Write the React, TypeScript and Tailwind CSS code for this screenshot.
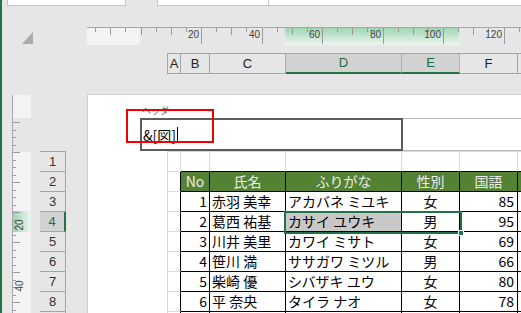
import React from 'react';

const JP = { fontFamily: '"Noto Sans CJK JP", "Liberation Sans", sans-serif' };

// column widths of A..F in px (right border included), G fills the rest
const COLS = [13, 29, 76, 116, 58, 58];

const DATA = [
    ['1', '赤羽 美幸', 'アカバネ ミユキ', '女', '85'],
    ['2', '葛西 祐基', 'カサイ ユウキ', '男', '95'],
    ['3', '川井 美里', 'カワイ ミサト', '女', '69'],
    ['4', '笹川 満', 'ササガワ ミツル', '男', '66'],
    ['5', '柴崎 優', 'シバザキ ユウ', '女', '80'],
    ['6', '平 奈央', 'タイラ ナオ', '女', '78'],
];

const PX_PER_MM = 3.025;
const ZERO_X = 53.5; // ruler origin, relative to ruler left edge

function HRuler() {
    const ticks: number[] = [];
    for (let mm = -15; mm <= 125; mm += 5) ticks.push(mm);
    return (
        <div className="relative h-[18px] flex-1 border-t border-[#a8a8a8] overflow-hidden">
            <div className="absolute left-0 top-0 h-full w-[53px] bg-[#f3f3f3]" />
            <div className="absolute left-[198px] top-0 h-full w-[174px] bg-gradient-to-b from-[#9ed5b4] to-[#eef5f0]" />
            {ticks.map((mm) => {
                const x = Math.round(ZERO_X + mm * PX_PER_MM);
                const h = mm % 20 === 0 && mm > 0 ? 16 : mm % 10 === 0 ? 7 : 4;
                return <div key={mm} className="absolute top-0 w-px bg-[#9a9a9a]" style={{ left: x, height: h }} />;
            })}
            {[20, 40, 60, 80, 100, 120].map((mm) => {
                const x = Math.round(ZERO_X + mm * PX_PER_MM);
                return (
                    <span
                        key={mm}
                        className="absolute top-[1px] text-[10px] leading-[12px] text-[#444] text-right w-[30px]"
                        style={{ left: x - 32, fontFamily: '"Liberation Sans", sans-serif' }}
                    >
                        {mm}
                    </span>
                );
            })}
        </div>
    );
}

function VRuler() {
    const ticks: number[] = [];
    for (let y = 27; y < 220; y += 7.5) ticks.push(y);
    return (
        <div className="relative w-[19px] h-full border-l border-[#a8a8a8] overflow-hidden">
            <div className="absolute left-0 top-0 w-full h-[23px] bg-[#f3f3f3]" />
            <div className="absolute left-0 top-[57px] w-full h-[170px] bg-[#f3f3f3]" />
            <div className="absolute left-0 top-[116px] w-full h-[21px] bg-gradient-to-r from-[#9ed5b4] to-[#eef5f0]" />
            {ticks.map((y, i) => (
                <div
                    key={y}
                    className="absolute left-0 h-px bg-[#9a9a9a]"
                    style={{ top: Math.round(y), width: i % 4 === 0 ? 7 : 3 }}
                />
            ))}
            <span
                className="absolute left-[1px] top-[124px] text-[10px] leading-[12px] text-[#444] -rotate-90 origin-center"
                style={{ fontFamily: '"Liberation Sans", sans-serif' }}
            >
                20
            </span>
            <span
                className="absolute left-[1px] top-[185px] text-[10px] leading-[12px] text-[#444] -rotate-90 origin-center"
                style={{ fontFamily: '"Liberation Sans", sans-serif' }}
            >
                40
            </span>
        </div>
    );
}

function ColHeaders() {
    const names = ['A', 'B', 'C', 'D', 'E', 'F'];
    return (
        <div className="flex h-[21px] ml-[165px] border-t border-l border-[#a6a6a6]" style={{ fontFamily: '"Liberation Sans", sans-serif' }}>
            {names.map((n, i) => {
                const sel = n === 'D' || n === 'E';
                return (
                    <div
                        key={n}
                        style={{ width: COLS[i] }}
                        className={
                            sel
                                ? 'flex items-center justify-center border-r border-[#b0b0b0] border-b-2 border-b-[#217346] bg-[#d2d2d2] text-[#1f6e42] text-[13px]'
                                : 'flex items-center justify-center border-r border-b border-[#a6a6a6] text-[#222] text-[13px]'
                        }
                    >
                        {n}
                    </div>
                );
            })}
            <div className="flex-1 border-b border-[#a6a6a6]" />
        </div>
    );
}

function RowHeaders() {
    return (
        <div className="w-[26px] pt-[57px] flex flex-col" style={{ fontFamily: '"Liberation Sans", sans-serif' }}>
            <div className="border-t border-r border-[#a6a6a6]">
                {[1, 2, 3, 4, 5, 6, 7, 8].map((n) => (
                    <div
                        key={n}
                        className={
                            n === 4
                                ? 'h-[20px] flex items-center justify-center border-b border-[#a6a6a6] bg-[#d2d2d2] text-[#1f6e42] text-[13px] -mr-px border-r-2 border-r-[#217346]'
                                : 'h-[20px] flex items-center justify-center border-b border-[#a6a6a6] text-[#333] text-[13px]'
                        }
                    >
                        {n}
                    </div>
                ))}
                <div className="h-[20px]" />
            </div>
        </div>
    );
}

type CellProps = {
    w?: number;
    children?: React.ReactNode;
    className: string;
};

function Cell({ w, children, className }: CellProps) {
    return (
        <div style={w ? { width: w } : undefined} className={`h-[20px] flex items-center border-r border-b shrink-0 ${className}`}>
            {children}
        </div>
    );
}

function Sheet() {
    const light = 'border-[#d9d9d9]';
    return (
        <div className="ml-[79px] border-t border-l border-[#d9d9d9] text-[14px] text-black" style={JP}>
            {/* row 1 */}
            <div className="flex">
                <Cell w={COLS[0]} className={light} />
                {COLS.slice(1).map((w, i) => (
                    <Cell key={i} w={w} className="border-r-[#d9d9d9] border-b-black" />
                ))}
                <div className="flex-1 h-[20px] border-b border-black" />
            </div>
            {/* row 2: table header */}
            <div className="flex">
                <Cell w={COLS[0]} className="border-b-[#d9d9d9] border-r-black" />
                {['No', '氏名', 'ふりがな', '性別', '国語'].map((t, i) => (
                    <Cell key={t} w={COLS[i + 1]} className="border-black bg-[#548235] justify-center text-[#ececec]">
                        {t}
                    </Cell>
                ))}
                <div className="flex-1 h-[20px] border-b border-black bg-[#548235]" />
            </div>
            {DATA.map((r, ri) => (
                <div className="flex" key={r[0]}>
                    <Cell w={COLS[0]} className="border-b-[#d9d9d9] border-r-black" />
                    <Cell w={COLS[1]} className="border-black justify-end pr-[2px]">
                        {r[0]}
                    </Cell>
                    <Cell w={COLS[2]} className="border-black pl-[2px] whitespace-nowrap">
                        {r[1]}
                    </Cell>
                    <Cell w={COLS[3]} className={`border-black pl-[2px] whitespace-nowrap ${ri === 1 ? 'bg-[#c8c8c8]' : ''}`}>
                        {r[2]}
                    </Cell>
                    <Cell w={COLS[4]} className="border-black justify-center">
                        {r[3]}
                    </Cell>
                    <Cell w={COLS[5]} className="border-black justify-end pr-[3px]">
                        {r[4]}
                    </Cell>
                    <div className="flex-1 h-[20px] border-b border-black" />
                </div>
            ))}
            <div className="flex">
                <Cell w={COLS[0]} className="border-b-[#d9d9d9] border-r-black" />
                {COLS.slice(1).map((w, i) => (
                    <Cell key={i} w={w} className="border-black" />
                ))}
            </div>
        </div>
    );
}

function Page() {
    return (
        <div className="relative flex-1 h-full bg-white border-t border-l border-[#cfcfcf] overflow-hidden">
            {/* header area */}
            <div className="relative h-[56px] flex flex-col">
                <span className="absolute left-[54px] top-[10px] text-[9px] leading-[11px] text-[#6e6e6e]" style={JP}>
                    ヘッダー
                </span>
                <div className="mt-[23px] flex h-[33px]">
                    <div className="ml-[52px] w-[263px] h-full border-2 border-[#5c5c5c] flex items-center pl-[1px]">
                        <span className="text-[14px] leading-[16px] text-black" style={JP}>
                            &amp;[図]
                        </span>
                        <span className="ml-[1px] w-px h-[16px] bg-black" />
                    </div>
                    <div className="flex-1 h-full border-y border-[#b9b9b9]" />
                </div>
            </div>
            <Sheet />

            {/* selection D4:E4 */}
            <div className="absolute left-[196px] top-[116px] w-[178px] h-[23px] border-2 border-[#217346]" />
            <div className="absolute left-[370px] top-[135px] w-[6px] h-[6px] bg-[#217346] border border-white" />

            {/* red annotation box */}
            <div className="absolute left-[38px] top-[14px] w-[88px] h-[34px] border-2 border-[#f00000]" />
        </div>
    );
}

export default function App() {
    return (
        <div className="w-[521px] h-[313px] overflow-hidden bg-[#e6e6e6] border-l-2 border-[#217346] flex flex-col">
            {/* top strip */}
            <div className="h-[7px] flex shrink-0">
                <div className="ml-[5px] w-[119px] h-[6px] bg-white border-x border-b border-[#c4c4c4]" />
                <div className="ml-[31px] w-[112px] h-[6px] bg-white border-x border-b border-[#c4c4c4]" />
                <div className="flex-1 h-[6px] bg-white border-b border-[#c4c4c4]" />
            </div>
            {/* ruler row */}
            <div className="mt-[20px] h-[18px] flex shrink-0">
                <div className="ml-[20px] mt-[5px] w-[11px] h-[12px]">
                    <svg width="11" height="12" viewBox="0 0 11 12">
                        <polygon points="11,0 11,12 0,12" fill="#ababab" />
                    </svg>
                </div>
                <div className="w-[54px]" />
                <HRuler />
            </div>
            {/* column headers */}
            <div className="mt-[8px] shrink-0">
                <ColHeaders />
            </div>
            {/* body */}
            <div className="mt-[20px] flex flex-1 min-h-0">
                <div className="w-[10px]" />
                <div className="pt-px h-full">
                    <VRuler />
                </div>
                <div className="w-[9px]" />
                <RowHeaders />
                <div className="w-[21px]" />
                <Page />
            </div>
        </div>
    );
}
